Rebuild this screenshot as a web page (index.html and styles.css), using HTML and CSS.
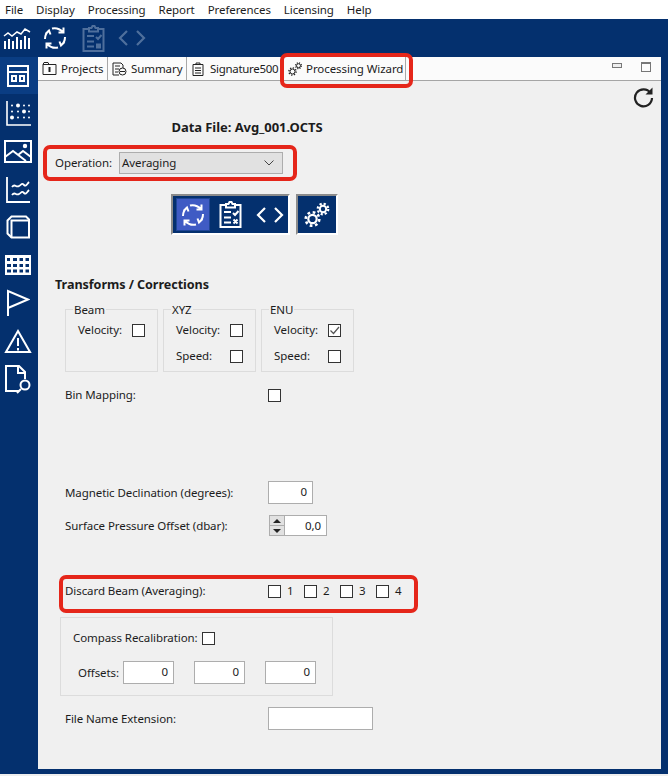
FILE: index.html
```html
<!DOCTYPE html>
<html lang="en">
<head>
<meta charset="utf-8">
<title>Processing Wizard</title>
<link rel="stylesheet" href="styles.css">
</head>
<body>
<nav class="menubar">
  <span>File</span><span>Display</span><span>Processing</span><span>Report</span><span>Preferences</span><span>Licensing</span><span>Help</span>
</nav>
<header class="toolbar">
  <svg class="tool-chart" width="28" height="24" viewBox="0 0 28 24" fill="none" stroke="#fff"><path d="M1 10l4-3 4 3 5-4 4 2 4-5 5 3" stroke-width="1.500"/><path d="M2 23v-8M6 23v-10M10 23v-8M14 23v-12M18 23v-9M22 23v-13M26 23v-11" stroke-width="2"/></svg>
  <svg class="tool-cycle" width="24" height="24" viewBox="0 0 24 24" fill="none" stroke="#fff" stroke-width="2"><path d="M2 13Q2 8 5.500 5M2.500 8L6 4.500l1.500 4M9 2.500Q15 1 20 6M20.500 1.500v5h-5M22 11Q22 16 18.500 19M21.500 16L18 19.500l-1.500-4M15 21.500Q9 23 4 18M3.500 22.500v-5h5"/></svg>
  <svg class="tool-clip" width="23" height="27" viewBox="0 0 23 27" fill="none" stroke="#4f6f9c" stroke-width="2"><path d="M7 4H1.500v22h20V4H16M7 6.500V3h2.500l1-2h2l1 2H16v3.500zM5 11h7M5 16.500h7M5 21.500h7M14 12l2 2 3.500-4"/><rect x="14" y="18.500" width="5" height="5" fill="#4f6f9c" stroke="none"/></svg>
  <svg class="tool-code" width="28" height="18" viewBox="0 0 28 18" fill="none" stroke="#4f6f9c" stroke-width="2.200"><path d="M9 2L2 9l7 7M19 2l7 7-7 7"/></svg>
</header>
<div class="workspace">
  <aside class="rail">
    <div class="rail-item active"><svg width="22" height="22" viewBox="0 0 22 22" fill="none" stroke="#fff" stroke-width="2"><rect x="1" y="1" width="20" height="20"/><path d="M1 7h20"/><rect x="5" y="11" width="4" height="5"/><rect x="13" y="11" width="4" height="5"/></svg></div>
    <div class="rail-item"><svg width="25" height="25" viewBox="0 0 25 25" fill="none" stroke="#fff" stroke-width="1.600"><path d="M1 0v24h24"/><g fill="#fff" stroke="none"><circle cx="12" cy="4.500" r="2"/><circle cx="18" cy="10.500" r="2"/><circle cx="6" cy="16.500" r="2"/><circle cx="6" cy="4.500" r="1"/><circle cx="18" cy="4.500" r="1"/><circle cx="23" cy="4.500" r="1"/><circle cx="6" cy="10.500" r="1"/><circle cx="12" cy="10.500" r="1"/><circle cx="23" cy="10.500" r="1"/><circle cx="12" cy="16.500" r="1"/><circle cx="18" cy="16.500" r="1"/><circle cx="23" cy="16.500" r="1"/></g></svg></div>
    <div class="rail-item"><svg width="28" height="23" viewBox="0 0 28 23" fill="none" stroke="#fff" stroke-width="2"><rect x="1" y="1" width="26" height="21"/><path d="M1 17l8-6 13 10M14 15l5-4 8 6"/><circle cx="21" cy="6" r="2.200" fill="#fff" stroke="none"/></svg></div>
    <div class="rail-item"><svg width="26" height="27" viewBox="0 0 26 27" fill="none" stroke="#fff" stroke-width="1.800"><path d="M2 1v25h23"/><path d="M7 11c3-4 4 1 7-1s3-3 5-1 3-1 5-3M7 19c3-4 4 1 7-1s3-3 5-1 3-1 5-3"/></svg></div>
    <div class="rail-item"><svg width="24" height="24" viewBox="0 0 24 24" fill="none" stroke="#fff" stroke-width="2"><path d="M1.500 5.500L5.500 1.500H20L23 4.500V22.500H5.500L1.500 18.500z"/><path d="M5.500 22.500V5.500H23" /></svg></div>
    <div class="rail-item"><svg width="26" height="20" viewBox="0 0 26 20"><path fill="#fff" fill-rule="evenodd" d="M0 0h26v20H0zM2 3v3h3V3zm6 0v3h4V3zm6.500 0v3h3.500V3zm6 0v3h3.500V3zM2 9v3h4V9zm6 0v3h4V9zm6.500 0v3h3.500V9zm6 0v3h3.500V9zM2 14.500v3h4v-3zm6 0v3h4v-3zm6.500 0v3h3.500v-3zm6 0v3h3.500v-3z"/></svg></div>
    <div class="rail-item"><svg width="24" height="28" viewBox="0 0 24 28" fill="none" stroke="#fff" stroke-width="2"><path d="M2 27V2l20 8.500L2 19"/></svg></div>
    <div class="rail-item"><svg width="28" height="26" viewBox="0 0 28 26" fill="none" stroke="#fff" stroke-width="2"><path d="M14 3L2 24h24z"/><path d="M14 10v8M14 20v2.500"/></svg></div>
    <div class="rail-item"><svg width="28" height="30" viewBox="0 0 28 30" fill="none" stroke="#fff" stroke-width="2"><path d="M15 27H2V2h13l6 6v7M14 2v7h7"/><circle cx="21" cy="21" r="4.500"/><path d="M17 25l-4 4"/></svg></div>
  </aside>
  <main class="panel">
    <div class="tabstrip">
      <div class="tab tab-projects"><svg width="15" height="13" viewBox="0 0 15 13" fill="none" stroke="#222"><path d="M1 2.500h13v10H1zM1 2.500l1-2h4l1 2"/><path d="M7.500 5v5" stroke-width="2"/></svg><span>Projects</span></div>
      <div class="tab tab-summary"><svg width="15" height="14" viewBox="0 0 15 14" fill="none" stroke="#222"><path d="M7 13H1V1h8l2 2v3M3 4h5M3 7h4M3 10h3"/><circle cx="10.500" cy="9.500" r="3.500"/><path d="M8 9.500h5"/></svg><span>Summary</span></div>
      <div class="tab tab-signature"><svg width="12" height="14" viewBox="0 0 12 14" fill="none" stroke="#222"><path d="M1 2.500h10v11H1zM4 2.500V1h4v1.500M3 6h6M3 8.500h6M3 11h6"/></svg><span>Signature500</span></div>
      <div class="tab tab-wizard"><svg width="14" height="14" viewBox="0 0 14 14" fill="none" stroke="#222"><circle cx="4.500" cy="9.500" r="2.500"/><circle cx="4.500" cy="9.500" r="3.600" stroke-width="1.400" stroke-dasharray="1.300 1.500"/><circle cx="10.500" cy="3.700" r="2"/><circle cx="10.500" cy="3.700" r="2.900" stroke-width="1.200" stroke-dasharray="1.100 1.200"/></svg><span>Processing Wizard</span></div>
      <div class="win-controls"><span class="win-min"></span><span class="win-max"></span></div>
    </div>
    <div class="content">
      <div class="refresh-row"><svg width="22" height="22" viewBox="0 0 22 22" fill="none" stroke="#222" stroke-width="2.200"><path d="M18.500 7A8.500 8.500 0 1 0 20 12"/><path d="M20.500 1.500v7h-7" fill="#222" stroke="none"/></svg></div>
      <h1 class="title">Data File: Avg_001.OCTS</h1>
      <div class="operation">
        <label class="op-label">Operation:</label>
        <div class="select"><span>Averaging</span><svg width="10" height="6" viewBox="0 0 10 6" fill="none" stroke="#444"><path d="M.5.500L5 5 9.500.500"/></svg></div>
      </div>
      <div class="mode-row">
        <div class="mode-group">
          <div class="mode-btn on"><svg width="24" height="24" viewBox="0 0 24 24" fill="none" stroke="#fff" stroke-width="2"><path d="M2 13Q2 8 5.500 5M2.500 8L6 4.500l1.500 4M9 2.500Q15 1 20 6M20.500 1.500v5h-5M22 11Q22 16 18.500 19M21.500 16L18 19.500l-1.500-4M15 21.500Q9 23 4 18M3.500 22.500v-5h5"/></svg></div>
          <div class="mode-btn"><svg width="23" height="27" viewBox="0 0 23 27" fill="none" stroke="#fff" stroke-width="2"><path d="M7 4H1.500v22h20V4H16M7 6.500V3h2.500l1-2h2l1 2H16v3.500zM5 11h7M5 16.500h7M5 21.500h7M14 12l2 2 3.500-4M14.500 18.500l4 4M18.500 18.500l-4 4"/></svg></div>
          <div class="mode-btn mode-code"><svg width="28" height="18" viewBox="0 0 28 18" fill="none" stroke="#fff" stroke-width="2.200"><path d="M9 2L2 9l7 7M19 2l7 7-7 7"/></svg></div>
        </div>
        <div class="mode-single"><svg width="26" height="26" viewBox="0 0 26 26" fill="none" stroke="#fff"><circle cx="8.500" cy="17" r="4.200" stroke-width="2.200"/><circle cx="8.500" cy="17" r="6.800" stroke-width="2.600" stroke-dasharray="2.700 2.640"/><circle cx="19" cy="7" r="3.200" stroke-width="2"/><circle cx="19" cy="7" r="5.300" stroke-width="2.200" stroke-dasharray="2.200 1.960"/></svg></div>
      </div>
      <h2 class="section">Transforms / Corrections</h2>
      <div class="groups">
        <fieldset class="group"><legend>Beam</legend>
          <div class="check-row"><label>Velocity:</label><span class="cb"></span></div>
        </fieldset>
        <fieldset class="group"><legend>XYZ</legend>
          <div class="check-row"><label>Velocity:</label><span class="cb"></span></div>
          <div class="check-row"><label>Speed:</label><span class="cb"></span></div>
        </fieldset>
        <fieldset class="group"><legend>ENU</legend>
          <div class="check-row"><label>Velocity:</label><span class="cb"><svg width="11" height="11" viewBox="0 0 11 11" fill="none" stroke="#555" stroke-width="1.200"><path d="M1.500 5.500L4.500 8.500 10 2"/></svg></span></div>
          <div class="check-row"><label>Speed:</label><span class="cb"></span></div>
        </fieldset>
      </div>
      <div class="row row-bin"><label class="row-label">Bin Mapping:</label><span class="cb"></span></div>
      <div class="row row-mag"><label class="row-label">Magnetic Declination (degrees):</label><div class="input w45">0</div></div>
      <div class="row row-surface"><label class="row-label">Surface Pressure Offset (dbar):</label>
        <div class="spinner"><span class="spin-up"></span><span class="spin-down"></span></div><div class="input w43">0,0</div></div>
      <div class="row row-discard"><label class="row-label">Discard Beam (Averaging):</label>
        <div class="beam-list">
          <span class="beam"><span class="cb"></span>1</span>
          <span class="beam"><span class="cb"></span>2</span>
          <span class="beam"><span class="cb"></span>3</span>
          <span class="beam"><span class="cb"></span>4</span>
        </div>
      </div>
      <section class="compass">
        <div class="compass-top"><label>Compass Recalibration:</label><span class="cb"></span></div>
        <div class="compass-offsets"><label>Offsets:</label><div class="input w51">0</div><div class="input w51">0</div><div class="input w51">0</div></div>
      </section>
      <div class="row row-file"><label class="row-label">File Name Extension:</label><div class="input w105"></div></div>
      <div class="mark mark-tab"></div>
      <div class="mark mark-op"></div>
      <div class="mark mark-discard"></div>
    </div>
  </main>
</div>
<div class="bottom"></div>
</body>
</html>
```
FILE: styles.css
```css
* { box-sizing: border-box; }
html, body { margin: 0; height: 100%; }
body {
  width: 668px; height: 776px; overflow: hidden;
  background: #04306e; color: #1c1c1c;
  font: 11.5px/16px "Noto Sans", sans-serif;
  letter-spacing: -.08px;
  display: flex; flex-direction: column;
}
svg { display: block; flex: none; }
.menubar {
  height: 19px; background: #fff; flex: none;
  display: flex; gap: 13px; padding-left: 5px; align-items: center;
}
.toolbar {
  height: 38px; flex: none;
  display: flex; align-items: center; padding-left: 3px;
}
.tool-cycle { margin-left: 12px; }
.tool-clip { margin-left: 15px; }
.tool-code { margin-left: 13px; }
.workspace { flex: 1; display: flex; min-height: 0; }
.rail { width: 38px; flex: none; display: flex; flex-direction: column; }
.rail-item { height: 38px; display: flex; align-items: center; justify-content: center; padding-right: 2px; }
.rail-item.active { background: #0a3d83; height: 37px; }
.panel {
  width: 623px; height: 712px; background: #f0f0f0;
  border-radius: 2px 2px 0 0; flex: none;
  display: flex; flex-direction: column; position: relative;
}
.tabstrip {
  height: 24px; flex: none; background: #fbfbfb;
  border-bottom: 1px solid #a5a5a5;
  display: flex; align-items: stretch;
}
.tab { display: flex; align-items: center; gap: 4px; padding-left: 4px; border-right: 1px solid #a8a8a8; flex: none; white-space: nowrap; }
.tab-projects { width: 70px; }
.tab-summary { width: 79px; }
.tab-signature { width: 97px; padding-left: 5px; border-right: 0; gap: 6px; letter-spacing: -.3px; }
.tab-wizard { width: 122px; }
.win-controls { margin-left: auto; display: flex; gap: 19px; padding: 5px 10px 0 0; align-items: flex-start; }
.win-min { width: 10px; height: 5px; margin-top: 1px; border: 1px solid #777; background: #eee; }
.win-max { width: 10px; height: 10px; border: 1px solid #777; border-top-width: 2px; }
.content { flex: 1; position: relative; }
.refresh-row { height: 28px; padding: 5px 0 0 594px; }
.title { margin: 0; padding-top: 10px; height: 30px; width: 418px; text-align: center; font-size: 13px; line-height: 16px; font-weight: 700; letter-spacing: -.06px; }
.operation { display: flex; align-items: center; margin: 13px 0 0 17px; height: 22px; }
.op-label { width: 64px; margin-bottom: 1px; }
.select {
  width: 164px; height: 22px; padding: 0 8px 1px 2px;
  background: #e1e1e1; border: 1px solid #adadad;
  display: flex; align-items: center; justify-content: space-between;
}
.mode-row { display: flex; gap: 6px; margin: 20px 0 0 133px; }
.mode-group, .mode-single {
  height: 41px; background: #04306e;
  border: 2px solid #fff; border-top-color: #8b8b8b; border-left-color: #8b8b8b;
  display: flex; align-items: center;
}
.mode-group { width: 119px; padding-left: 3px; }
.mode-single { width: 42px; justify-content: center; }
.mode-btn { width: 34px; height: 33px; display: flex; align-items: center; justify-content: center; margin-right: 3px; }
.mode-btn.on { background: #3f5bc4; border: 1px solid #1f4596; }
.mode-code { margin-left: 3px; margin-right: 0; }
.section { margin: 42px 0 0 17px; height: 16px; font-size: 12.6px; line-height: 16px; font-weight: 700; letter-spacing: -.06px; }
.groups { display: flex; gap: 5px; margin: 11px 0 0 27px; }
.group {
  width: 93px; height: 68px; margin: 0; padding: 2px 0 0 12px; min-width: 0;
  border: 1px solid #dcdcdc;
}
.group legend { padding: 0 1px; margin-left: -5px; line-height: 11px; height: 11px; }
.check-row { height: 26px; display: flex; align-items: center; }
.check-row label { width: 54px; }
.cb { width: 13px; height: 13px; flex: none; display: block; background: #fff; border: 1px solid #333; }
.row { display: flex; align-items: center; margin-left: 27px; }
.row-label { width: 203px; flex: none; }
.row-bin { margin-top: 16px; height: 14px; }
.row-mag { margin-top: 79px; height: 23px; }
.row-mag .row-label { padding-top: 1px; }
.row-surface { margin-top: 11px; height: 21px; }
.row-surface .row-label { width: 204px; }
.input { height: 100%; background: #fff; border: 1px solid #adadad; text-align: right; padding-right: 5px; line-height: 20px; flex: none; }
.w45 { width: 45px; } .w43 { width: 43px; } .w51 { width: 51px; } .w105 { width: 105px; }
.spinner { width: 15px; height: 21px; display: flex; flex-direction: column; background: #e1e1e1; border: 1px solid #adadad; border-right: 0; }
.spin-up, .spin-down { flex: 1; position: relative; }
.spin-up { border-bottom: 1px solid #adadad; }
.spin-up::after, .spin-down::after { content: ""; position: absolute; left: 3px; top: 3px; border: 4px solid transparent; border-top: 0; border-bottom: 4px solid #222; }
.spin-down::after { border-bottom: 0; border-top: 4px solid #222; }
.row-discard { margin-top: 48px; height: 14px; }
.beam-list { display: flex; }
.beam { width: 36px; display: flex; align-items: center; gap: 6px; }
.compass { margin: 19px 0 0 22px; width: 273px; height: 79px; border: 1px solid #dcdcdc; }
.compass-top { display: flex; align-items: center; padding: 13px 0 0 12px; height: 27px; }
.compass-top label { width: 129px; white-space: nowrap; }
.compass-offsets { display: flex; align-items: center; margin: 16px 0 0 17px; height: 23px; }
.compass-offsets label { width: 45px; }
.compass-offsets .input + .input { margin-left: 20px; }
.row-file { margin-top: 11px; height: 23px; }
.row-file .row-label { padding-top: 1px; }
.mark { position: absolute; border: 4px solid #e5261a; border-radius: 7px; pointer-events: none; }
.mark-tab { left: 242px; top: -28px; width: 133px; height: 35px; }
.mark-op { left: 5px; top: 64px; width: 254px; height: 36px; }
.mark-discard { left: 21px; top: 494px; width: 359px; height: 38px; }
.bottom { height: 7px; flex: none; background: linear-gradient(#04306e 5px, #eee 5px); }
```
